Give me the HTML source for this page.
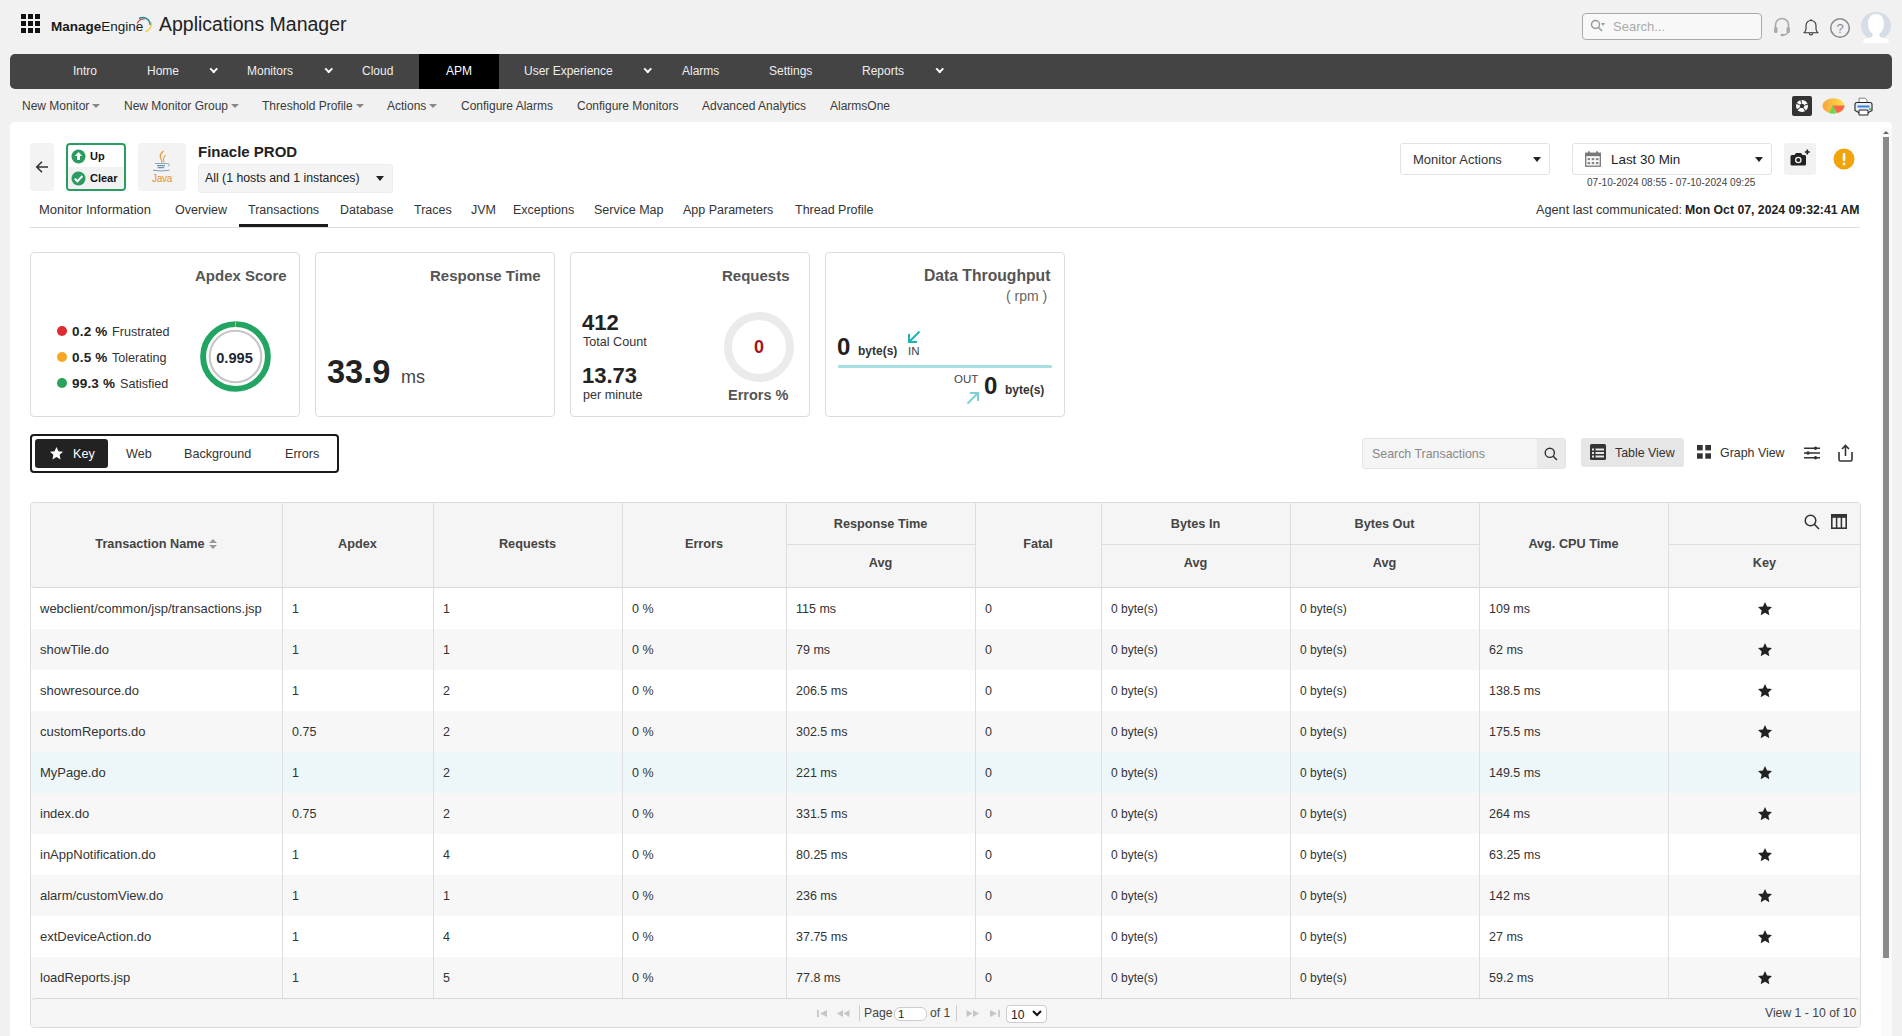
<!DOCTYPE html>
<html><head><meta charset="utf-8">
<style>
*{box-sizing:border-box;margin:0;padding:0}
html,body{width:1902px;height:1036px;overflow:hidden;background:#f1f1f1;font-family:"Liberation Sans",sans-serif;color:#333}
.a{position:absolute;white-space:nowrap}
.c{line-height:1}
#nav{position:absolute;left:10px;top:54px;width:1882px;height:35px;background:#444;border-radius:5px}
.nv{position:absolute;top:0;height:35px;line-height:35px;font-size:12px;color:#eee}
.chev{position:absolute;top:15px;width:5.5px;height:5.5px;border-right:2.3px solid #fff;border-bottom:2.3px solid #fff;transform:rotate(45deg)}
.sn{position:absolute;top:96px;height:20px;line-height:20px;font-size:12px;color:#3a3a3a}
.tri{display:inline-block;width:0;height:0;border-left:4px solid transparent;border-right:4px solid transparent;border-top:4px solid #888;vertical-align:middle;margin-left:3px;position:relative;top:-1px}
#panel{position:absolute;left:10px;top:122px;width:1882px;height:1000px;background:#fff;border-radius:5px}
.tab{position:absolute;top:200px;height:20px;line-height:20px;font-size:12.5px;color:#333}
.card{position:absolute;top:252px;height:165px;border:1px solid #dcdcdc;border-radius:4px;background:#fff}
.ctitle{position:absolute;right:12px;top:14px;font-size:15px;font-weight:700;color:#555;line-height:20px}
.hd{line-height:20px;font-size:12.7px;font-weight:700;color:#444}
.td{line-height:20px;font-size:12.5px;color:#333}
.ft{line-height:18px;font-size:12.2px;color:#444}
.sort{display:inline-block;width:8px;height:10px;margin-left:4px;position:relative;top:1px;background:linear-gradient(#fff0,#fff0)}
.sort:before{content:"";position:absolute;left:0;top:0;border-left:4px solid transparent;border-right:4px solid transparent;border-bottom:4px solid #999}
.sort:after{content:"";position:absolute;left:0;top:6px;border-left:4px solid transparent;border-right:4px solid transparent;border-top:4px solid #999}
</style></head><body>
<!-- top bar -->
<div class="a" style="left:21px;top:14px;width:20px;height:20px">
<svg width="20" height="20" viewBox="0 0 20 20"><g fill="#111"><rect x="0" y="0" width="5" height="5"/><rect x="7" y="0" width="5" height="5"/><rect x="14" y="0" width="5" height="5"/><rect x="0" y="7" width="5" height="5"/><rect x="7" y="7" width="5" height="5"/><rect x="14" y="7" width="5" height="5"/><rect x="0" y="14" width="5" height="5"/><rect x="7" y="14" width="5" height="5"/><rect x="14" y="14" width="5" height="5"/></g></svg>
</div>
<div class="a" style="left:51px;top:17px;line-height:20px;font-size:13.5px;color:#1a1a1a"><b>Manage</b>Engine</div>
<div class="a" style="left:159px;top:12px;line-height:24px;font-size:19.5px;color:#222">Applications Manager</div>

<div class="a" style="left:1582px;top:13px;width:180px;height:27px;border:1px solid #aaa;border-radius:4px;background:#f8f8f8"></div>
<div class="a" style="left:1613px;top:16px;line-height:21px;font-size:13px;color:#aaa">Search...</div>

<div id="nav"></div>
<div class="nv" style="left:73px;top:54px">Intro</div>
<div class="nv" style="left:147px;top:54px">Home</div>
<div class="nv" style="left:247px;top:54px">Monitors</div>
<div class="nv" style="left:362px;top:54px">Cloud</div>
<div class="a" style="left:419px;top:54px;width:80px;height:35px;background:#000"></div>
<div class="nv" style="left:446px;top:54px;color:#fff">APM</div>
<div class="nv" style="left:524px;top:54px">User Experience</div>
<div class="nv" style="left:682px;top:54px">Alarms</div>
<div class="nv" style="left:769px;top:54px">Settings</div>
<div class="nv" style="left:862px;top:54px">Reports</div>

<div class="sn" style="left:22px">New Monitor<span class="tri"></span></div>
<div class="sn" style="left:124px">New Monitor Group<span class="tri"></span></div>
<div class="sn" style="left:262px">Threshold Profile<span class="tri"></span></div>
<div class="sn" style="left:387px">Actions<span class="tri"></span></div>
<div class="sn" style="left:461px">Configure Alarms</div>
<div class="sn" style="left:577px">Configure Monitors</div>
<div class="sn" style="left:702px">Advanced Analytics</div>
<div class="sn" style="left:830px">AlarmsOne</div>

<div id="panel"></div>
<div class="chev" style="left:211px;top:66px"></div>
<div class="chev" style="left:326px;top:66px"></div>
<div class="chev" style="left:645px;top:66px"></div>
<div class="chev" style="left:937px;top:66px"></div>
<!-- logo arc -->
<svg class="a" style="left:134px;top:14px" width="20" height="20" viewBox="0 0 20 20"><path d="M3.2 9.5 A6.3 6.3 0 0 1 10.5 5.2" stroke="#c0394a" stroke-width="1.1" fill="none"/><path d="M5 4.6 A7.5 7.5 0 0 1 16.2 11" stroke="#1f8a8a" stroke-width="1.6" fill="none"/><path d="M17.3 8 A8 8 0 0 1 11.5 17.5" stroke="#f2d04a" stroke-width="1.5" fill="none"/></svg>
<!-- top right icons -->
<svg class="a" style="left:1590px;top:19px" width="16" height="14" viewBox="0 0 16 14"><circle cx="5.5" cy="5.5" r="4" stroke="#999" stroke-width="1.4" fill="none"/><path d="M8.5 8.5 L12 12" stroke="#999" stroke-width="1.6"/><path d="M11 4 L15 4 L13 7z" fill="#999"/></svg>
<svg class="a" style="left:1773px;top:17px" width="18" height="20" viewBox="0 0 18 20"><path d="M2.5 11 V8 A6.5 6.5 0 0 1 15.5 8 V11" stroke="#aaa" stroke-width="1.6" fill="none"/><rect x="1" y="10" width="3.5" height="6" rx="1.5" fill="#aaa"/><rect x="13.5" y="10" width="3.5" height="6" rx="1.5" fill="#aaa"/><path d="M15 15 Q14 18 10 18" stroke="#aaa" stroke-width="1.4" fill="none"/><rect x="7.5" y="16.8" width="3.5" height="2.4" rx="1.2" fill="#aaa"/></svg>
<svg class="a" style="left:1801px;top:17px" width="20" height="20" viewBox="0 0 20 20"><path d="M3 15.8 Q4.8 14.5 5 12 V8.5 A5 5 0 0 1 15 8.5 V12 Q15.2 14.5 17 15.8 Z" stroke="#333" stroke-width="1.1" fill="none" stroke-linejoin="round"/><path d="M8.3 16.3 A1.7 1.7 0 0 0 11.7 16.3" stroke="#333" stroke-width="1.1" fill="none"/><path d="M10 2.2 V3.6" stroke="#333" stroke-width="1.3"/></svg>
<svg class="a" style="left:1829px;top:17px" width="22" height="22" viewBox="0 0 22 22"><circle cx="11" cy="11" r="9.3" stroke="#888" stroke-width="1.5" fill="none"/><text x="11" y="15.5" font-family="Liberation Sans" font-size="13" font-weight="400" fill="#888" text-anchor="middle">?</text></svg>
<svg class="a" style="left:1860px;top:12px" width="32" height="32" viewBox="0 0 32 32"><ellipse cx="16" cy="14" rx="15" ry="14" fill="#d7dde6"/><path d="M16 2 C10 2 8 7 8 12 C8 17 11 21 13 22 L12 25 C8 26 4 27 3 28 Q3 30 5 31 L27 31 Q29 30 29 28 C28 27 24 26 20 25 L19 22 C21 21 24 17 24 12 C24 7 22 2 16 2Z" fill="#fff"/></svg>
<!-- subnav right icons -->
<div class="a" style="left:1792px;top:96px;width:20px;height:20px;background:#333;border-radius:2px"></div>
<svg class="a" style="left:1794px;top:98px" width="16" height="16" viewBox="0 0 16 16"><circle cx="8" cy="8" r="6" fill="#fff"/><g fill="#333"><path d="M8 8 L6.2 2.3 L7.6 2.1Z"/><path d="M8 8 L13.5 5.6 L13.8 7Z"/><path d="M8 8 L12.2 12.5 L11 13.3Z"/><path d="M8 8 L3.6 12.4 L2.8 11.3Z"/><path d="M8 8 L2.3 6 L2.8 4.7Z"/></g><circle cx="8" cy="8" r="2.3" fill="#333"/></svg>
<svg class="a" style="left:1822px;top:98px" width="23" height="16" viewBox="0 0 23 16"><defs><linearGradient id="pg" x1="0" y1="0" x2="1" y2="0"><stop offset="0" stop-color="#f8a33c"/><stop offset="1" stop-color="#fde24a"/></linearGradient></defs><ellipse cx="11.5" cy="7.8" rx="11" ry="7.6" fill="url(#pg)"/><path d="M10.5 7.5 L22.5 7.5 A11 7.6 0 0 1 14.8 15 Z" fill="#f9694a"/><path d="M10.5 7.5 L14 15.3 A11 7.6 0 0 1 7.5 15.2 Z" fill="#55e055"/></svg>
<svg class="a" style="left:1854px;top:97px" width="19" height="19" viewBox="0 0 19 19"><path d="M5 1.2 H11 L13 3 V7 H5Z" fill="#fff" stroke="#777" stroke-width="0.9"/><path d="M1 7.5 Q1 5.5 3 5.5 H16 Q18 5.5 18 7.5 V13.5 L14.5 15.5 H4.5 L1 13.5Z" fill="#e9eef3" stroke="#222" stroke-width="1.1"/><path d="M3.5 8.5 H15.5 V10.5 H3.5Z" fill="#3b7fe0"/><path d="M5 13 H14 V18 H5Z" fill="#fff" stroke="#222" stroke-width="1"/><circle cx="16" cy="12" r="0.9" fill="#2a2"/></svg>


<!-- monitor header -->
<div class="a" style="left:30px;top:143px;width:24px;height:48px;background:#f3f3f3;border-radius:3px"></div>
<svg class="a" style="left:35px;top:160px" width="14" height="14" viewBox="0 0 14 14"><path d="M13 7 H2 M7 1.8 L1.8 7 L7 12.2" stroke="#333" stroke-width="1.6" fill="none"/></svg>
<div class="a" style="left:66px;top:143px;width:60px;height:48px;border:2px solid #2a9c60;border-radius:4px;overflow:hidden;background:#fff">
  <div style="position:absolute;left:0;top:22px;width:56px;height:22px;background:#f2f2f2"></div>
</div>
<svg class="a" style="left:71px;top:149px" width="15" height="15" viewBox="0 0 15 15"><circle cx="7.5" cy="7.5" r="7" fill="#2a9c60"/><path d="M7.5 3 L11.2 7 H9 V11 H6 V7 H3.8Z" fill="#fff"/></svg>
<svg class="a" style="left:71px;top:171px" width="15" height="15" viewBox="0 0 15 15"><circle cx="7.5" cy="7.5" r="7" fill="#2a9c60"/><path d="M3.8 7.6 L6.4 10.2 L11.4 5" stroke="#fff" stroke-width="2" fill="none"/></svg>
<div class="a" style="left:90px;top:148px;line-height:16px;font-size:11px;font-weight:700;color:#111">Up</div>
<div class="a" style="left:90px;top:170px;line-height:16px;font-size:11px;font-weight:700;color:#111">Clear</div>
<div class="a" style="left:138px;top:143px;width:48px;height:48px;background:#f3f3f3;border-radius:3px"></div>
<svg class="a" style="left:150px;top:150px" width="24" height="24" viewBox="0 0 24 24"><path d="M13.5 1 Q8.5 5.5 11 9 Q12.5 11 11.5 12.5" stroke="#e8902e" stroke-width="1.2" fill="none"/><path d="M15.5 5 Q12.5 8 13.8 10.5 Q14.2 11.5 13.5 12.5" stroke="#e8902e" stroke-width="1" fill="none"/><path d="M5 13.5 H17.5 Q20.5 13.5 18 16.5" stroke="#7f9db5" stroke-width="0.9" fill="none"/><path d="M7 15.6 H15 M7.8 17.6 H14.2" stroke="#6f93ad" stroke-width="1.4" fill="none"/><path d="M3 20.2 Q11 21.8 19.5 20.2" stroke="#7f9db5" stroke-width="1" fill="none"/></svg>
<div class="a" style="left:152px;top:173px;line-height:12px;font-size:10px;color:#e8902e;letter-spacing:-0.3px">Java</div>
<div class="a" style="left:198px;top:142px;line-height:20px;font-size:15px;font-weight:700;color:#222">Finacle PROD</div>
<div class="a" style="left:198px;top:164px;width:195px;height:29px;background:#f4f4f4;border-radius:3px;border:1px solid #ececec"></div>
<div class="a" style="left:205px;top:169px;line-height:18px;font-size:12.3px;color:#222">All (1 hosts and 1 instances)</div>
<div class="a" style="left:376px;top:176px;width:0;height:0;border-left:4px solid transparent;border-right:4px solid transparent;border-top:5px solid #222"></div>

<div class="a" style="left:1400px;top:143px;width:150px;height:32px;border:1px solid #e2e2e2;border-radius:3px;background:#fff"></div>
<div class="a" style="left:1413px;top:151px;line-height:18px;font-size:13px;color:#333">Monitor Actions</div>
<div class="a" style="left:1533px;top:157px;width:0;height:0;border-left:4px solid transparent;border-right:4px solid transparent;border-top:5px solid #222"></div>
<div class="a" style="left:1572px;top:143px;width:200px;height:32px;border:1px solid #e2e2e2;border-radius:3px;background:#fff"></div>
<svg class="a" style="left:1585px;top:151px" width="16" height="16" viewBox="0 0 16 16"><rect x="0.7" y="2.2" width="14.6" height="13" fill="#fff" stroke="#777" stroke-width="1.3"/><rect x="0.7" y="2.2" width="14.6" height="3" fill="#777"/><rect x="3" y="0.3" width="1.8" height="3" fill="#777"/><rect x="11.2" y="0.3" width="1.8" height="3" fill="#777"/><g fill="#888"><rect x="2.5" y="7" width="2.6" height="2.2"/><rect x="6.7" y="7" width="2.6" height="2.2"/><rect x="10.9" y="7" width="2.6" height="2.2"/><rect x="2.5" y="11" width="2.6" height="2.2"/><rect x="6.7" y="11" width="2.6" height="2.2"/><rect x="10.9" y="11" width="2.6" height="2.2"/></g></svg>
<div class="a" style="left:1611px;top:151px;line-height:18px;font-size:13.4px;color:#222">Last 30 Min</div>
<div class="a" style="left:1755px;top:157px;width:0;height:0;border-left:4px solid transparent;border-right:4px solid transparent;border-top:5px solid #222"></div>
<div class="a" style="left:1587px;top:176px;line-height:14px;font-size:10.1px;color:#444">07-10-2024 08:55 - 07-10-2024 09:25</div>
<div class="a" style="left:1784px;top:143px;width:32px;height:32px;background:#f2f2f2;border-radius:3px"></div>
<svg class="a" style="left:1789px;top:148px" width="22" height="20" viewBox="0 0 22 20"><path d="M1.5 8.5 Q1.5 7 3 7 H5.5 L7 5 H12 L13.5 7 H15.5 Q17 7 17 8.5 V16 Q17 17.5 15.5 17.5 H3 Q1.5 17.5 1.5 16Z" fill="#222"/><circle cx="9.3" cy="12" r="3.3" fill="#f2f2f2"/><circle cx="9.3" cy="12" r="2" fill="#222"/><path d="M18.3 1.5 V6.5 M15.8 4 H20.8" stroke="#222" stroke-width="1.6"/></svg>
<svg class="a" style="left:1833px;top:148px" width="22" height="22" viewBox="0 0 22 22"><circle cx="11" cy="11" r="10.5" fill="#f0a30a"/><rect x="9.7" y="5" width="2.6" height="8" rx="1" fill="#fff"/><rect x="9.7" y="14.6" width="2.6" height="2.6" rx="1" fill="#fff"/></svg>

<div class="tab" style="left:39px;font-size:13px">Monitor Information</div>
<div class="tab" style="left:175px">Overview</div>
<div class="tab" style="left:248px">Transactions</div>
<div class="tab" style="left:340px">Database</div>
<div class="tab" style="left:414px">Traces</div>
<div class="tab" style="left:471px">JVM</div>
<div class="tab" style="left:513px">Exceptions</div>
<div class="tab" style="left:594px">Service Map</div>
<div class="tab" style="left:683px">App Parameters</div>
<div class="tab" style="left:795px">Thread Profile</div>
<div class="a" style="left:30px;top:227px;width:1830px;height:1px;background:#dedede"></div>
<div class="a" style="left:239px;top:224px;width:89px;height:3px;background:#1a1a1a"></div>
<div class="a" style="left:1536px;top:200px;line-height:20px;font-size:12.7px;color:#333">Agent last communicated:</div><div class="a" style="left:1685px;top:200px;line-height:20px;font-size:12.25px;font-weight:700;color:#222">Mon Oct 07, 2024 09:32:41 AM</div>


<!-- cards -->
<div class="card" style="left:30px;width:270px"></div>
<div class="a" style="left:195px;top:266px;line-height:20px;font-size:15px;font-weight:700;color:#555">Apdex Score</div>
<div class="a" style="left:57px;top:326px;width:10px;height:10px;border-radius:50%;background:#e02b35"></div>
<div class="a" style="left:57px;top:352px;width:10px;height:10px;border-radius:50%;background:#f5a623"></div>
<div class="a" style="left:57px;top:378px;width:10px;height:10px;border-radius:50%;background:#27a35a"></div>
<div class="a" style="left:72px;top:323px;line-height:18px;font-size:13.5px;font-weight:700;color:#222;letter-spacing:0.2px">0.2 %</div><div class="a" style="left:112px;top:323px;line-height:18px;font-size:12.6px;color:#333">Frustrated</div>
<div class="a" style="left:72px;top:349px;line-height:18px;font-size:13.5px;font-weight:700;color:#222;letter-spacing:0.2px">0.5 %</div><div class="a" style="left:112px;top:349px;line-height:18px;font-size:12.6px;color:#333">Tolerating</div>
<div class="a" style="left:72px;top:375px;line-height:18px;font-size:13.5px;font-weight:700;color:#222;letter-spacing:0.2px">99.3 %</div><div class="a" style="left:120px;top:375px;line-height:18px;font-size:12.6px;color:#333">Satisfied</div>
<svg class="a" style="left:199px;top:320px" width="73" height="73" viewBox="0 0 73 73"><circle cx="36.5" cy="36.5" r="32.4" stroke="#22a462" stroke-width="5.9" fill="none"/><path d="M36.5 1 V7" stroke="#f5a623" stroke-width="1.2"/><circle cx="36.5" cy="36.5" r="25.8" stroke="#c6c6c6" stroke-width="2.1" fill="none"/></svg>
<div class="a" style="left:198px;top:348px;width:73px;text-align:center;line-height:20px;font-size:14.6px;font-weight:700;color:#1e2633">0.995</div>

<div class="card" style="left:315px;width:240px"></div>
<div class="a" style="left:430px;top:266px;line-height:20px;font-size:15px;font-weight:700;color:#555">Response Time</div>
<div class="a" style="left:327px;top:354px;line-height:36px;font-size:32.5px;font-weight:700;color:#222">33.9</div>
<div class="a" style="left:401px;top:367px;line-height:20px;font-size:18px;color:#444">ms</div>

<div class="card" style="left:570px;width:240px"></div>
<div class="a" style="left:722px;top:266px;line-height:20px;font-size:15px;font-weight:700;color:#555">Requests</div>
<div class="a" style="left:582px;top:312px;line-height:22px;font-size:22px;font-weight:700;color:#222">412</div>
<div class="a" style="left:583px;top:334px;line-height:16px;font-size:12.6px;color:#333">Total Count</div>
<div class="a" style="left:582px;top:365px;line-height:22px;font-size:22px;font-weight:700;color:#222">13.73</div>
<div class="a" style="left:583px;top:387px;line-height:16px;font-size:12.6px;color:#333">per minute</div>
<svg class="a" style="left:723px;top:311px" width="72" height="72" viewBox="0 0 72 72"><circle cx="36" cy="36" r="31" stroke="#ebebeb" stroke-width="8" fill="none"/></svg>
<div class="a" style="left:723px;top:337px;width:72px;text-align:center;line-height:20px;font-size:18px;font-weight:700;color:#a3151a">0</div>
<div class="a" style="left:728px;top:385px;line-height:20px;font-size:14.5px;font-weight:700;color:#555">Errors %</div>

<div class="card" style="left:825px;width:240px"></div>
<div class="a" style="left:924px;top:266px;line-height:20px;font-size:15.7px;font-weight:700;color:#555">Data Throughput</div>
<div class="a" style="left:1006px;top:287px;line-height:18px;font-size:14px;color:#666">( rpm )</div>
<div class="a" style="left:837px;top:335px;line-height:24px;font-size:24px;font-weight:700;color:#222">0</div>
<div class="a" style="left:858px;top:343px;line-height:16px;font-size:12px;font-weight:700;color:#333">byte(s)</div>
<svg class="a" style="left:907px;top:330px" width="14" height="14" viewBox="0 0 14 14"><path d="M12.5 1.5 L2.5 11.5 M2 4 V12 H10" stroke="#1fb3b3" stroke-width="2" fill="none"/></svg>
<div class="a" style="left:908px;top:344px;line-height:14px;font-size:11.5px;color:#444">IN</div>
<div class="a" style="left:838px;top:365px;width:214px;height:3px;background:#a8dfe0;border-radius:1px"></div>
<div class="a" style="left:954px;top:372px;line-height:14px;font-size:11.5px;color:#444">OUT</div>
<svg class="a" style="left:966px;top:391px" width="14" height="14" viewBox="0 0 14 14"><path d="M1.5 12.5 L11.5 2.5 M4 2 H12 V10" stroke="#7fd0d4" stroke-width="2" fill="none"/></svg>
<div class="a" style="left:984px;top:374px;line-height:24px;font-size:24px;font-weight:700;color:#222">0</div>
<div class="a" style="left:1005px;top:382px;line-height:16px;font-size:12px;font-weight:700;color:#333">byte(s)</div>

<!-- filter bar -->
<div class="a" style="left:30px;top:434px;width:309px;height:39px;border:2px solid #1a1a1a;border-radius:4px"></div>
<div class="a" style="left:35px;top:439px;width:73px;height:29px;background:#222;border-radius:3px"></div>
<svg class="a" style="left:49px;top:446px" width="15" height="15" viewBox="0 0 24 24"><path d="M12 1.5 L15.1 8.3 L22.5 9.1 L17 14.1 L18.5 21.4 L12 17.7 L5.5 21.4 L7 14.1 L1.5 9.1 L8.9 8.3Z" fill="#fff"/></svg>
<div class="a" style="left:73px;top:445px;line-height:18px;font-size:12.6px;color:#fff">Key</div>
<div class="a" style="left:126px;top:445px;line-height:18px;font-size:12.6px;color:#333">Web</div>
<div class="a" style="left:184px;top:445px;line-height:18px;font-size:12.6px;color:#333">Background</div>
<div class="a" style="left:285px;top:445px;line-height:18px;font-size:12.6px;color:#333">Errors</div>

<div class="a" style="left:1362px;top:438px;width:204px;height:31px;border:1px solid #e3e3e3;border-radius:3px;background:#f5f5f5;overflow:hidden"><div style="position:absolute;left:174px;top:0;width:30px;height:31px;background:#eaeaea"></div></div>
<div class="a" style="left:1372px;top:445px;line-height:18px;font-size:12.4px;color:#888">Search Transactions</div>
<svg class="a" style="left:1544px;top:447px" width="14" height="14" viewBox="0 0 14 14"><circle cx="5.8" cy="5.8" r="4.6" stroke="#333" stroke-width="1.4" fill="none"/><path d="M9.2 9.2 L13 13" stroke="#333" stroke-width="1.5"/></svg>
<div class="a" style="left:1581px;top:438px;width:103px;height:29px;background:#e6e6e6;border-radius:3px"></div>
<svg class="a" style="left:1590px;top:444px" width="16" height="16" viewBox="0 0 16 16"><rect x="0" y="0" width="16" height="16" rx="1.5" fill="#333"/><g fill="#e6e6e6"><rect x="2" y="4.5" width="2" height="2"/><rect x="5.5" y="4.5" width="8.5" height="2"/><rect x="2" y="8" width="2" height="2"/><rect x="5.5" y="8" width="8.5" height="2"/><rect x="2" y="11.5" width="2" height="2"/><rect x="5.5" y="11.5" width="8.5" height="2"/></g></svg>
<div class="a" style="left:1615px;top:444px;line-height:18px;font-size:12.4px;color:#333">Table View</div>
<svg class="a" style="left:1697px;top:445px" width="14" height="14" viewBox="0 0 14 14"><g fill="#333"><rect x="0" y="0" width="5.7" height="5.4"/><rect x="8.3" y="0" width="5.7" height="5.4"/><rect x="0" y="8.3" width="5.7" height="5.4"/><rect x="8.3" y="8.3" width="5.7" height="5.4"/></g></svg>
<div class="a" style="left:1720px;top:444px;line-height:18px;font-size:12.4px;color:#333">Graph View</div>
<svg class="a" style="left:1804px;top:446px" width="16" height="14" viewBox="0 0 16 14"><g stroke="#333" stroke-width="1.5"><path d="M0 2.2 H16 M0 7 H16 M0 11.8 H16"/></g><g fill="#333"><circle cx="11.5" cy="2.2" r="1.7"/><circle cx="4" cy="7" r="1.7"/><circle cx="11.5" cy="11.8" r="1.7"/></g></svg>
<svg class="a" style="left:1838px;top:444px" width="15" height="18" viewBox="0 0 15 18"><path d="M7.5 12 V1.5 M4 5 L7.5 1.5 L11 5" stroke="#333" stroke-width="1.6" fill="none"/><path d="M1 8 V15.5 Q1 17 2.5 17 H12.5 Q14 17 14 15.5 V8" stroke="#333" stroke-width="1.6" fill="none"/></svg>

<!-- table -->
<div class="a" style="left:30px;top:502px;width:1831px;height:526px;border:1px solid #dcdcdc;border-radius:4px;background:#fff;overflow:hidden">
<div style="position:absolute;left:0;top:0;width:1829px;height:85px;background:#f5f5f5;border-bottom:1px solid #d8d8d8;border-radius:0 0 4px 4px"></div>
<div style="position:absolute;left:0;top:85px;width:1829px;height:41px;background:#fff"></div>
<div style="position:absolute;left:0;top:126px;width:1829px;height:41px;background:#f7f7f7"></div>
<div style="position:absolute;left:0;top:167px;width:1829px;height:41px;background:#fff"></div>
<div style="position:absolute;left:0;top:208px;width:1829px;height:41px;background:#f7f7f7"></div>
<div style="position:absolute;left:0;top:249px;width:1829px;height:41px;background:#edf7fa"></div>
<div style="position:absolute;left:0;top:290px;width:1829px;height:41px;background:#f7f7f7"></div>
<div style="position:absolute;left:0;top:331px;width:1829px;height:41px;background:#fff"></div>
<div style="position:absolute;left:0;top:372px;width:1829px;height:41px;background:#f7f7f7"></div>
<div style="position:absolute;left:0;top:413px;width:1829px;height:41px;background:#fff"></div>
<div style="position:absolute;left:0;top:454px;width:1829px;height:41px;background:#f7f7f7"></div>
<div style="position:absolute;left:0;top:495px;width:1829px;height:30px;background:#f5f5f5;border-top:1px solid #d8d8d8;border-radius:4px 4px 0 0"></div>
</div>
<div class="a" style="left:282px;top:503px;width:1px;height:495px;background:#dedede"></div>
<div class="a" style="left:433px;top:503px;width:1px;height:495px;background:#dedede"></div>
<div class="a" style="left:622px;top:503px;width:1px;height:495px;background:#dedede"></div>
<div class="a" style="left:786px;top:503px;width:1px;height:495px;background:#dedede"></div>
<div class="a" style="left:975px;top:503px;width:1px;height:495px;background:#dedede"></div>
<div class="a" style="left:1101px;top:503px;width:1px;height:495px;background:#dedede"></div>
<div class="a" style="left:1290px;top:503px;width:1px;height:495px;background:#dedede"></div>
<div class="a" style="left:1479px;top:503px;width:1px;height:495px;background:#dedede"></div>
<div class="a" style="left:1668px;top:503px;width:1px;height:495px;background:#dedede"></div>
<div class="a" style="left:786px;top:544px;width:189px;height:1px;background:#dedede"></div>
<div class="a" style="left:1101px;top:544px;width:189px;height:1px;background:#dedede"></div>
<div class="a" style="left:1290px;top:544px;width:189px;height:1px;background:#dedede"></div>
<div class="a" style="left:1668px;top:544px;width:193px;height:1px;background:#dedede"></div>
<div class="a hd" style="left:30px;top:534px;width:252px;text-align:center">Transaction Name<span class="sort"></span></div>
<div class="a hd" style="left:282px;top:534px;width:151px;text-align:center">Apdex</div>
<div class="a hd" style="left:433px;top:534px;width:189px;text-align:center">Requests</div>
<div class="a hd" style="left:622px;top:534px;width:164px;text-align:center">Errors</div>
<div class="a hd" style="left:786px;top:514px;width:189px;text-align:center">Response Time</div>
<div class="a hd" style="left:786px;top:553px;width:189px;text-align:center">Avg</div>
<div class="a hd" style="left:975px;top:534px;width:126px;text-align:center">Fatal</div>
<div class="a hd" style="left:1101px;top:514px;width:189px;text-align:center">Bytes In</div>
<div class="a hd" style="left:1101px;top:553px;width:189px;text-align:center">Avg</div>
<div class="a hd" style="left:1290px;top:514px;width:189px;text-align:center">Bytes Out</div>
<div class="a hd" style="left:1290px;top:553px;width:189px;text-align:center">Avg</div>
<div class="a hd" style="left:1479px;top:534px;width:189px;text-align:center">Avg. CPU Time</div>
<div class="a hd" style="left:1668px;top:553px;width:193px;text-align:center">Key</div>
<div class="a td" style="left:40px;top:599px;font-size:13px">webclient/common/jsp/transactions.jsp</div>
<div class="a td" style="left:292px;top:599px;font-size:12.5px">1</div>
<div class="a td" style="left:443px;top:599px;font-size:12.5px">1</div>
<div class="a td" style="left:632px;top:599px;font-size:12.5px">0 %</div>
<div class="a td" style="left:796px;top:599px;font-size:12.5px">115 ms</div>
<div class="a td" style="left:985px;top:599px;font-size:12.5px">0</div>
<div class="a td" style="left:1111px;top:599px;font-size:12px">0 byte(s)</div>
<div class="a td" style="left:1300px;top:599px;font-size:12px">0 byte(s)</div>
<div class="a td" style="left:1489px;top:599px;font-size:12.5px">109 ms</div>
<svg class="a" style="left:1757px;top:601px" width="16" height="16" viewBox="0 0 24 24"><path d="M12 1.5 L15.1 8.3 L22.5 9.1 L17 14.1 L18.5 21.4 L12 17.7 L5.5 21.4 L7 14.1 L1.5 9.1 L8.9 8.3Z" fill="#222"/></svg>
<div class="a td" style="left:40px;top:640px;font-size:13px">showTile.do</div>
<div class="a td" style="left:292px;top:640px;font-size:12.5px">1</div>
<div class="a td" style="left:443px;top:640px;font-size:12.5px">1</div>
<div class="a td" style="left:632px;top:640px;font-size:12.5px">0 %</div>
<div class="a td" style="left:796px;top:640px;font-size:12.5px">79 ms</div>
<div class="a td" style="left:985px;top:640px;font-size:12.5px">0</div>
<div class="a td" style="left:1111px;top:640px;font-size:12px">0 byte(s)</div>
<div class="a td" style="left:1300px;top:640px;font-size:12px">0 byte(s)</div>
<div class="a td" style="left:1489px;top:640px;font-size:12.5px">62 ms</div>
<svg class="a" style="left:1757px;top:642px" width="16" height="16" viewBox="0 0 24 24"><path d="M12 1.5 L15.1 8.3 L22.5 9.1 L17 14.1 L18.5 21.4 L12 17.7 L5.5 21.4 L7 14.1 L1.5 9.1 L8.9 8.3Z" fill="#222"/></svg>
<div class="a td" style="left:40px;top:681px;font-size:13px">showresource.do</div>
<div class="a td" style="left:292px;top:681px;font-size:12.5px">1</div>
<div class="a td" style="left:443px;top:681px;font-size:12.5px">2</div>
<div class="a td" style="left:632px;top:681px;font-size:12.5px">0 %</div>
<div class="a td" style="left:796px;top:681px;font-size:12.5px">206.5 ms</div>
<div class="a td" style="left:985px;top:681px;font-size:12.5px">0</div>
<div class="a td" style="left:1111px;top:681px;font-size:12px">0 byte(s)</div>
<div class="a td" style="left:1300px;top:681px;font-size:12px">0 byte(s)</div>
<div class="a td" style="left:1489px;top:681px;font-size:12.5px">138.5 ms</div>
<svg class="a" style="left:1757px;top:683px" width="16" height="16" viewBox="0 0 24 24"><path d="M12 1.5 L15.1 8.3 L22.5 9.1 L17 14.1 L18.5 21.4 L12 17.7 L5.5 21.4 L7 14.1 L1.5 9.1 L8.9 8.3Z" fill="#222"/></svg>
<div class="a td" style="left:40px;top:722px;font-size:13px">customReports.do</div>
<div class="a td" style="left:292px;top:722px;font-size:12.5px">0.75</div>
<div class="a td" style="left:443px;top:722px;font-size:12.5px">2</div>
<div class="a td" style="left:632px;top:722px;font-size:12.5px">0 %</div>
<div class="a td" style="left:796px;top:722px;font-size:12.5px">302.5 ms</div>
<div class="a td" style="left:985px;top:722px;font-size:12.5px">0</div>
<div class="a td" style="left:1111px;top:722px;font-size:12px">0 byte(s)</div>
<div class="a td" style="left:1300px;top:722px;font-size:12px">0 byte(s)</div>
<div class="a td" style="left:1489px;top:722px;font-size:12.5px">175.5 ms</div>
<svg class="a" style="left:1757px;top:724px" width="16" height="16" viewBox="0 0 24 24"><path d="M12 1.5 L15.1 8.3 L22.5 9.1 L17 14.1 L18.5 21.4 L12 17.7 L5.5 21.4 L7 14.1 L1.5 9.1 L8.9 8.3Z" fill="#222"/></svg>
<div class="a td" style="left:40px;top:763px;font-size:13px">MyPage.do</div>
<div class="a td" style="left:292px;top:763px;font-size:12.5px">1</div>
<div class="a td" style="left:443px;top:763px;font-size:12.5px">2</div>
<div class="a td" style="left:632px;top:763px;font-size:12.5px">0 %</div>
<div class="a td" style="left:796px;top:763px;font-size:12.5px">221 ms</div>
<div class="a td" style="left:985px;top:763px;font-size:12.5px">0</div>
<div class="a td" style="left:1111px;top:763px;font-size:12px">0 byte(s)</div>
<div class="a td" style="left:1300px;top:763px;font-size:12px">0 byte(s)</div>
<div class="a td" style="left:1489px;top:763px;font-size:12.5px">149.5 ms</div>
<svg class="a" style="left:1757px;top:765px" width="16" height="16" viewBox="0 0 24 24"><path d="M12 1.5 L15.1 8.3 L22.5 9.1 L17 14.1 L18.5 21.4 L12 17.7 L5.5 21.4 L7 14.1 L1.5 9.1 L8.9 8.3Z" fill="#222"/></svg>
<div class="a td" style="left:40px;top:804px;font-size:13px">index.do</div>
<div class="a td" style="left:292px;top:804px;font-size:12.5px">0.75</div>
<div class="a td" style="left:443px;top:804px;font-size:12.5px">2</div>
<div class="a td" style="left:632px;top:804px;font-size:12.5px">0 %</div>
<div class="a td" style="left:796px;top:804px;font-size:12.5px">331.5 ms</div>
<div class="a td" style="left:985px;top:804px;font-size:12.5px">0</div>
<div class="a td" style="left:1111px;top:804px;font-size:12px">0 byte(s)</div>
<div class="a td" style="left:1300px;top:804px;font-size:12px">0 byte(s)</div>
<div class="a td" style="left:1489px;top:804px;font-size:12.5px">264 ms</div>
<svg class="a" style="left:1757px;top:806px" width="16" height="16" viewBox="0 0 24 24"><path d="M12 1.5 L15.1 8.3 L22.5 9.1 L17 14.1 L18.5 21.4 L12 17.7 L5.5 21.4 L7 14.1 L1.5 9.1 L8.9 8.3Z" fill="#222"/></svg>
<div class="a td" style="left:40px;top:845px;font-size:13px">inAppNotification.do</div>
<div class="a td" style="left:292px;top:845px;font-size:12.5px">1</div>
<div class="a td" style="left:443px;top:845px;font-size:12.5px">4</div>
<div class="a td" style="left:632px;top:845px;font-size:12.5px">0 %</div>
<div class="a td" style="left:796px;top:845px;font-size:12.5px">80.25 ms</div>
<div class="a td" style="left:985px;top:845px;font-size:12.5px">0</div>
<div class="a td" style="left:1111px;top:845px;font-size:12px">0 byte(s)</div>
<div class="a td" style="left:1300px;top:845px;font-size:12px">0 byte(s)</div>
<div class="a td" style="left:1489px;top:845px;font-size:12.5px">63.25 ms</div>
<svg class="a" style="left:1757px;top:847px" width="16" height="16" viewBox="0 0 24 24"><path d="M12 1.5 L15.1 8.3 L22.5 9.1 L17 14.1 L18.5 21.4 L12 17.7 L5.5 21.4 L7 14.1 L1.5 9.1 L8.9 8.3Z" fill="#222"/></svg>
<div class="a td" style="left:40px;top:886px;font-size:13px">alarm/customView.do</div>
<div class="a td" style="left:292px;top:886px;font-size:12.5px">1</div>
<div class="a td" style="left:443px;top:886px;font-size:12.5px">1</div>
<div class="a td" style="left:632px;top:886px;font-size:12.5px">0 %</div>
<div class="a td" style="left:796px;top:886px;font-size:12.5px">236 ms</div>
<div class="a td" style="left:985px;top:886px;font-size:12.5px">0</div>
<div class="a td" style="left:1111px;top:886px;font-size:12px">0 byte(s)</div>
<div class="a td" style="left:1300px;top:886px;font-size:12px">0 byte(s)</div>
<div class="a td" style="left:1489px;top:886px;font-size:12.5px">142 ms</div>
<svg class="a" style="left:1757px;top:888px" width="16" height="16" viewBox="0 0 24 24"><path d="M12 1.5 L15.1 8.3 L22.5 9.1 L17 14.1 L18.5 21.4 L12 17.7 L5.5 21.4 L7 14.1 L1.5 9.1 L8.9 8.3Z" fill="#222"/></svg>
<div class="a td" style="left:40px;top:927px;font-size:13px">extDeviceAction.do</div>
<div class="a td" style="left:292px;top:927px;font-size:12.5px">1</div>
<div class="a td" style="left:443px;top:927px;font-size:12.5px">4</div>
<div class="a td" style="left:632px;top:927px;font-size:12.5px">0 %</div>
<div class="a td" style="left:796px;top:927px;font-size:12.5px">37.75 ms</div>
<div class="a td" style="left:985px;top:927px;font-size:12.5px">0</div>
<div class="a td" style="left:1111px;top:927px;font-size:12px">0 byte(s)</div>
<div class="a td" style="left:1300px;top:927px;font-size:12px">0 byte(s)</div>
<div class="a td" style="left:1489px;top:927px;font-size:12.5px">27 ms</div>
<svg class="a" style="left:1757px;top:929px" width="16" height="16" viewBox="0 0 24 24"><path d="M12 1.5 L15.1 8.3 L22.5 9.1 L17 14.1 L18.5 21.4 L12 17.7 L5.5 21.4 L7 14.1 L1.5 9.1 L8.9 8.3Z" fill="#222"/></svg>
<div class="a td" style="left:40px;top:968px;font-size:13px">loadReports.jsp</div>
<div class="a td" style="left:292px;top:968px;font-size:12.5px">1</div>
<div class="a td" style="left:443px;top:968px;font-size:12.5px">5</div>
<div class="a td" style="left:632px;top:968px;font-size:12.5px">0 %</div>
<div class="a td" style="left:796px;top:968px;font-size:12.5px">77.8 ms</div>
<div class="a td" style="left:985px;top:968px;font-size:12.5px">0</div>
<div class="a td" style="left:1111px;top:968px;font-size:12px">0 byte(s)</div>
<div class="a td" style="left:1300px;top:968px;font-size:12px">0 byte(s)</div>
<div class="a td" style="left:1489px;top:968px;font-size:12.5px">59.2 ms</div>
<svg class="a" style="left:1757px;top:970px" width="16" height="16" viewBox="0 0 24 24"><path d="M12 1.5 L15.1 8.3 L22.5 9.1 L17 14.1 L18.5 21.4 L12 17.7 L5.5 21.4 L7 14.1 L1.5 9.1 L8.9 8.3Z" fill="#222"/></svg>
<svg class="a" style="left:1804px;top:514px" width="16" height="16" viewBox="0 0 16 16"><circle cx="6.5" cy="6.5" r="5.3" stroke="#333" stroke-width="1.5" fill="none"/><path d="M10.3 10.3 L15 15" stroke="#333" stroke-width="1.6"/></svg>
<svg class="a" style="left:1831px;top:514px" width="16" height="15" viewBox="0 0 16 15"><rect x="0.8" y="0.8" width="14.4" height="13.4" stroke="#333" stroke-width="1.6" fill="none"/><rect x="0.8" y="0.8" width="14.4" height="3" fill="#333"/><path d="M5.6 3 V14 M10.4 3 V14" stroke="#333" stroke-width="1.5"/></svg>
<svg class="a" style="left:817px;top:1009px" width="11" height="9" viewBox="0 0 11 9"><rect x="0" y="1" width="1.8" height="7" fill="#c6c6c6"/><path d="M10 1 L3 4.5 L10 8Z" fill="#c6c6c6"/></svg>
<svg class="a" style="left:837px;top:1009px" width="13" height="9" viewBox="0 0 13 9"><path d="M6 1 L0 4.5 L6 8Z" fill="#c6c6c6"/><path d="M12.5 1 L6.5 4.5 L12.5 8Z" fill="#c6c6c6"/></svg>
<div class="a" style="left:859px;top:1005px;width:1px;height:16px;background:#ccc"></div>
<div class="a ft" style="left:864px;top:1004px">Page</div>
<div class="a" style="left:894px;top:1007px;width:33px;height:14px;border:1px solid #ccc;border-radius:6px;background:#fff"></div>
<div class="a ft" style="left:898px;top:1005px;font-size:11.5px;color:#222">1</div>
<div class="a ft" style="left:930px;top:1004px">of 1</div>
<div class="a" style="left:956px;top:1005px;width:1px;height:16px;background:#ccc"></div>
<svg class="a" style="left:966px;top:1009px" width="13" height="9" viewBox="0 0 13 9"><path d="M0.5 1 L6.5 4.5 L0.5 8Z" fill="#c6c6c6"/><path d="M7 1 L13 4.5 L7 8Z" fill="#c6c6c6"/></svg>
<svg class="a" style="left:989px;top:1009px" width="11" height="9" viewBox="0 0 11 9"><path d="M1 1 L8 4.5 L1 8Z" fill="#c6c6c6"/><rect x="9.2" y="1" width="1.8" height="7" fill="#c6c6c6"/></svg>
<div class="a" style="left:1006px;top:1005px;width:41px;height:18px;border:1px solid #ccc;border-radius:4px;background:#fff"></div>
<div class="a ft" style="left:1011px;top:1006px;color:#222">10</div>
<svg class="a" style="left:1032px;top:1010px" width="10" height="7" viewBox="0 0 10 7"><path d="M1 1 L5 5 L9 1" stroke="#111" stroke-width="2" fill="none"/></svg>
<div class="a ft" style="left:1765px;top:1004px">View 1 - 10 of 10</div>
<!-- scrollbar -->
<div class="a" style="left:1881px;top:128px;width:11px;height:908px;background:#fafafa"></div>
<div class="a" style="left:1883px;top:137px;width:6px;height:821px;background:#8a8a8a"></div>
<div class="a" style="left:1883px;top:131px;width:0;height:0;border-left:3px solid transparent;border-right:3px solid transparent;border-bottom:3px solid #666"></div>
</body></html>
